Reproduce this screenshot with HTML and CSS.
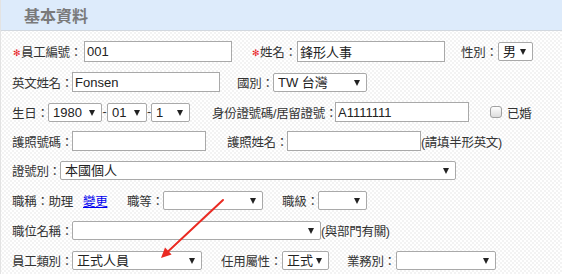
FILE: index.html
```html
<!DOCTYPE html>
<html lang="zh-Hant">
<head>
<meta charset="utf-8">
<title>基本資料</title>
<link rel="stylesheet" href="styles.css">
</head>
<body>
<div class="panel">
  <div class="panel-head"><h2 class="panel-title">基本資料</h2></div>
  <form class="panel-body">
    <div class="row row-first">
      <label class="lbl w72"><span class="req">✻</span>員工編號：</label>
      <input class="txt txt-tall w148" value="001">
      <label class="lbl w46 ml19"><span class="req">✻</span>姓名：</label>
      <input class="txt txt-tall w148" value="鋒形人事">
      <label class="lbl w37 ml16">性別：</label>
      <span class="sel w35"><select><option>男</option></select></span>
    </div>

    <div class="row">
      <label class="lbl w60">英文姓名：</label>
      <input class="txt w148" value="Fonsen">
      <label class="lbl w36 ml17">國別：</label>
      <span class="sel w94"><select><option>TW 台灣</option></select></span>
    </div>

    <div class="row">
      <label class="lbl w36">生日：</label>
      <span class="sel w54"><select><option>1980</option></select></span>
      <span class="dash w5">-</span>
      <span class="sel w40"><select><option>01</option></select></span>
      <span class="dash w4">-</span>
      <span class="sel w39"><select><option>1</option></select></span>
      <label class="lbl w123 ml22">身份證號碼/居留證號：</label>
      <input class="txt w134" value="A1111111">
      <label class="check ml21"><input type="checkbox" class="cb"><span>已婚</span></label>
    </div>

    <div class="row row-tight">
      <label class="lbl w60">護照號碼：</label>
      <input class="txt w134" value="">
      <label class="lbl w60 ml21">護照姓名：</label>
      <input class="txt w134" value="">
      <span class="note">(請填半形英文)</span>
    </div>

    <div class="row row-tight">
      <label class="lbl w48">證號別：</label>
      <span class="sel w396"><select><option>本國個人</option></select></span>
    </div>

    <div class="row">
      <span class="lbl w71">職稱：助理</span>
      <a class="link w44" href="#">變更</a>
      <label class="lbl w36">職等：</label>
      <span class="sel w100"><select><option></option></select></span>
      <label class="lbl w36 ml19">職級：</label>
      <span class="sel w49"><select><option></option></select></span>
    </div>

    <div class="row">
      <label class="lbl w60">職位名稱：</label>
      <span class="sel w249"><select><option></option></select></span>
      <span class="note">(與部門有關)</span>
    </div>

    <div class="row">
      <label class="lbl w60">員工類別：</label>
      <span class="sel w130"><select><option>正式人員</option></select></span>
      <label class="lbl w61 ml19">任用屬性：</label>
      <span class="sel w47"><select><option>正式</option></select></span>
      <label class="lbl w49 ml18">業務別：</label>
      <span class="sel w100"><select><option></option></select></span>
    </div>
  </form>

  <svg class="arrow" width="562" height="274" viewBox="0 0 562 274" aria-hidden="true">
    <line x1="222" y1="200" x2="167" y2="251.5" stroke="#ea2a22" stroke-width="2" stroke-linecap="round"/>
    <polygon points="160,258 170.6,254.6 164,247.6" fill="#ea2a22"/>
  </svg>
</div>
</body>
</html>
```

FILE: styles.css
```css
html, body {
  margin: 0;
  padding: 0;
}

body {
  font-family: "Liberation Sans", "Noto Sans CJK TC", sans-serif;
  font-size: 13px;
  color: #333;
  background-color: #fff;
  background-image: repeating-conic-gradient(#f3f3f3 0 25%, #ffffff 0 50%);
  background-size: 4px 4px;
}

.panel {
  position: relative;
  width: 562px;
  height: 274px;
  box-sizing: border-box;
  border-left: 1px solid #e3e3e3;
  overflow: hidden;
}

.panel-head {
  height: 30px;
  background: #ddebfb;
  border-bottom: 1px solid #d2d8df;
}

.panel-title {
  margin: 0;
  padding-left: 23px;
  line-height: 30px;
  font-size: 16px;
  font-weight: bold;
  color: #7a7a7a;
  font-family: "Noto Sans CJK TC", sans-serif;
}

.panel-body {
  display: flex;
  flex-direction: column;
  gap: 10px;
  padding: 10px 0 0 11px;
  margin: 0;
}

.row {
  display: flex;
  align-items: center;
  height: 20px;
  white-space: nowrap;
}

.row-first {
  height: 21px;
}

.row-tight {
  margin-top: -1px;
}

.lbl,
.note,
.link,
.check span,
.dash {
  font-size: 12.5px;
  letter-spacing: -0.3px;
}

.lbl {
  flex: none;
  display: inline-block;
  white-space: nowrap;
  color: #333;
}

.req {
  display: inline-block;
  width: 8px;
  margin-left: 1px;
  font-family: "DejaVu Sans", sans-serif;
  font-size: 9px;
  letter-spacing: 0;
  color: #e8141b;
  vertical-align: 1px;
}

.txt {
  flex: none;
  box-sizing: border-box;
  height: 20px;
  margin: 0;
  padding: 0 2px;
  border: 1px solid #a9a9a9;
  background: #fff;
  font-family: "Liberation Sans", "Noto Sans CJK TC", sans-serif;
  font-size: 13px;
  color: #222;
  outline: none;
}

.txt-tall {
  height: 21px;
}

.sel {
  position: relative;
  flex: none;
  display: inline-block;
  height: 19px;
}

.sel select {
  -webkit-appearance: none;
  appearance: none;
  display: block;
  box-sizing: border-box;
  width: 100%;
  height: 19px;
  margin: 0;
  padding: 0 12px 0 4px;
  border: 1px solid #a9a9a9;
  border-radius: 2px;
  background: #fff;
  font-family: "Liberation Sans", "Noto Sans CJK TC", sans-serif;
  font-size: 13px;
  line-height: 17px;
  color: #222;
  outline: none;
}

.sel::after {
  content: "";
  position: absolute;
  right: 7px;
  top: 7px;
  border-left: 3px solid transparent;
  border-right: 3px solid transparent;
  border-top: 6px solid #222;
  pointer-events: none;
}

.dash {
  flex: none;
  display: inline-block;
  text-align: center;
  color: #333;
}

.check {
  display: inline-flex;
  align-items: center;
  gap: 5px;
}

.cb {
  -webkit-appearance: none;
  appearance: none;
  width: 12px;
  height: 12px;
  margin: 0;
  box-sizing: border-box;
  border: 1px solid #a0a0a0;
  border-radius: 3px;
  background: linear-gradient(#fdfdfd, #dcdcdc);
}

.note {
  color: #333;
}

.link {
  flex: none;
  display: inline-block;
  color: #0000ee;
  text-decoration: underline;
}

.w4 { width: 4px; }
.w5 { width: 5px; }
.w35 { width: 35px; }
.w36 { width: 36px; }
.w37 { width: 37px; }
.w39 { width: 39px; }
.w40 { width: 40px; }
.w44 { width: 44px; }
.w46 { width: 46px; }
.w47 { width: 47px; }
.w48 { width: 48px; }
.w49 { width: 49px; }
.w54 { width: 54px; }
.w60 { width: 60px; }
.w61 { width: 61px; }
.w71 { width: 71px; }
.w72 { width: 72px; }
.w94 { width: 94px; }
.w100 { width: 100px; }
.w123 { width: 123px; }
.w130 { width: 130px; }
.w134 { width: 134px; }
.w148 { width: 148px; }
.w249 { width: 249px; }
.w396 { width: 396px; }

.ml16 { margin-left: 16px; }
.ml17 { margin-left: 17px; }
.ml18 { margin-left: 18px; }
.ml19 { margin-left: 19px; }
.ml21 { margin-left: 21px; }
.ml22 { margin-left: 22px; }

.arrow {
  position: absolute;
  left: 0;
  top: 0;
  pointer-events: none;
}
```
